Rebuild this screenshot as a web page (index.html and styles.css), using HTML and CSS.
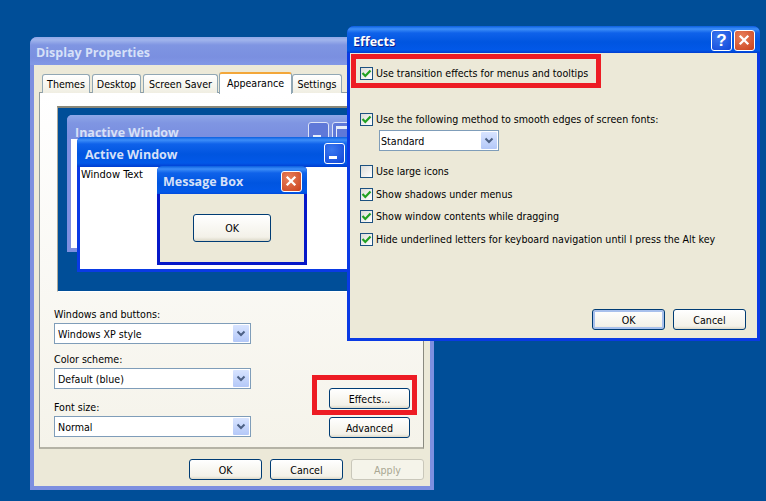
FILE: index.html
```html
<!DOCTYPE html>
<html lang="en">
<head>
<meta charset="utf-8">
<title>Display Properties</title>
<link rel="stylesheet" href="styles.css">
</head>
<body>
<div class="desktop">
  <section class="win dp inactive">
    <header class="titlebar"><span class="title">Display Properties</span></header>
    <div class="client dp-client">
      <div class="tabs">
        <span class="tab t1">Themes</span>
        <span class="tab t2">Desktop</span>
        <span class="tab t3">Screen Saver</span>
        <span class="tab t4 active">Appearance</span>
        <span class="tab t5">Settings</span>
      </div>
      <div class="pane">
        <div class="preview">
          <div class="mini m-inactive inactive">
            <div class="mini-title"><span class="title">Inactive Window</span>
              <span class="cap cap-pale"><i class="min"></i></span>
              <span class="cap cap-pale"><i class="max"></i></span>
            </div>
          </div>
          <div class="mini m-active">
            <div class="mini-title"><span class="title">Active Window</span>
              <span class="cap"><i class="min"></i></span>
            </div>
            <div class="mini-body">Window Text</div>
          </div>
          <div class="mini m-box">
            <div class="mini-title box-title"><span class="title">Message Box</span>
              <span class="cap close"><svg viewBox="0 0 20 20" width="19" height="19"><path d="M5 5 L14 14 M14 5 L5 14" stroke="#fff" stroke-width="2.4" fill="none"/></svg></span>
            </div>
            <div class="box-body"><span class="btn box-ok">OK</span></div>
          </div>
        </div>
        <div class="lower">
          <div class="fields">
            <label class="lbl">Windows and buttons:</label>
            <div class="combo wide"><span>Windows XP style</span><span class="arrow"><svg viewBox="0 0 16 17" width="16" height="17"><path d="M4.5 6.5 L8 10 L11.5 6.5" stroke="#4d6185" stroke-width="2" fill="none"/></svg></span></div>
            <label class="lbl l2">Color scheme:</label>
            <div class="combo wide"><span>Default (blue)</span><span class="arrow"><svg viewBox="0 0 16 17" width="16" height="17"><path d="M4.5 6.5 L8 10 L11.5 6.5" stroke="#4d6185" stroke-width="2" fill="none"/></svg></span></div>
            <label class="lbl l3">Font size:</label>
            <div class="combo wide"><span>Normal</span><span class="arrow"><svg viewBox="0 0 16 17" width="16" height="17"><path d="M4.5 6.5 L8 10 L11.5 6.5" stroke="#4d6185" stroke-width="2" fill="none"/></svg></span></div>
          </div>
          <div class="side-btns">
            <span class="btn side">Effects...</span>
            <span class="btn side">Advanced</span>
          </div>
        </div>
      </div>
      <div class="actions dp-actions">
        <span class="btn act">OK</span>
        <span class="btn act">Cancel</span>
        <span class="btn act disabled">Apply</span>
      </div>
    </div>
  </section>

  <section class="win fx">
    <header class="titlebar"><span class="title">Effects</span>
      <span class="cap help">?</span>
      <span class="cap close"><svg viewBox="0 0 20 20" width="19" height="19"><path d="M5 5 L14 14 M14 5 L5 14" stroke="#fff" stroke-width="2.4" fill="none"/></svg></span>
    </header>
    <div class="client fx-client">
      <div class="check c1"><span class="box on"><svg viewBox="0 0 11 11" width="11" height="11"><path d="M1.5 5 L4.3 8 L9.5 2.5" stroke="#21a121" stroke-width="2.2" fill="none"/></svg></span>Use transition effects for menus and tooltips</div>
      <div class="check c2"><span class="box on"><svg viewBox="0 0 11 11" width="11" height="11"><path d="M1.5 5 L4.3 8 L9.5 2.5" stroke="#21a121" stroke-width="2.2" fill="none"/></svg></span>Use the following method to smooth edges of screen fonts:</div>
      <div class="combo narrow"><span>Standard</span><span class="arrow"><svg viewBox="0 0 16 17" width="16" height="17"><path d="M4.5 6.5 L8 10 L11.5 6.5" stroke="#4d6185" stroke-width="2" fill="none"/></svg></span></div>
      <div class="check c3"><span class="box"></span>Use large icons</div>
      <div class="check c4"><span class="box on"><svg viewBox="0 0 11 11" width="11" height="11"><path d="M1.5 5 L4.3 8 L9.5 2.5" stroke="#21a121" stroke-width="2.2" fill="none"/></svg></span>Show shadows under menus</div>
      <div class="check c5"><span class="box on"><svg viewBox="0 0 11 11" width="11" height="11"><path d="M1.5 5 L4.3 8 L9.5 2.5" stroke="#21a121" stroke-width="2.2" fill="none"/></svg></span>Show window contents while dragging</div>
      <div class="check c4"><span class="box on"><svg viewBox="0 0 11 11" width="11" height="11"><path d="M1.5 5 L4.3 8 L9.5 2.5" stroke="#21a121" stroke-width="2.2" fill="none"/></svg></span>Hide underlined letters for keyboard navigation until I press the Alt key</div>
      <div class="actions fx-actions">
        <span class="btn act default">OK</span>
        <span class="btn act">Cancel</span>
      </div>
    </div>
  </section>

  <div class="mark mark-effects"></div>
  <div class="mark mark-check"></div>
</div>
</body>
</html>
```
FILE: styles.css
```css
* { box-sizing: border-box; }
html, body { margin: 0; padding: 0; }
body {
  font-family: "DejaVu Sans", Tahoma, sans-serif;
  font-stretch: condensed;
  font-size: 10.6px;
  color: #000;
}
.desktop {
  position: relative;
  width: 766px;
  height: 501px;
  background: #004e98;
  overflow: hidden;
}
.win {
  position: absolute;
  display: flex;
  flex-direction: column;
  border-radius: 7px 7px 0 0;
  background: #0a3ae4;
  padding: 0 3px 3px;
}
.dp {
  left: 30px; top: 37px; width: 404px; height: 453px;
  background: #7d8fe0;
  padding: 0 4px 4px;
}
.fx {
  left: 347px; top: 26px; width: 413px; height: 315px;
  z-index: 2;
}
.titlebar {
  display: flex;
  align-items: center;
  gap: 2px;
  height: 27px;
  margin: 0 -3px;
  padding: 2px 5px 0 6px;
  border-radius: 7px 7px 0 0;
  background: linear-gradient(#0a5fe0 0, #3d8ef8 3px, #0f62ea 7px, #0055e0 16px, #0258e8 24px, #003dd0 27px);
}
.dp .titlebar {
  height: 28px;
  margin: 0 -4px;
  padding-top: 2px;
  background: linear-gradient(#8fa8e8 0, #a0b4ec 3px, #7f95e2 8px, #7a8fe0 20px, #8298e6 28px);
}
.title {
  font-family: "Open Sans", sans-serif;
  font-stretch: normal;
  font-weight: 700;
  font-size: 12.5px;
  color: #fff;
  flex: 1;
  text-shadow: 1px 1px 0 #0f1f8f;
}
.fx .title, .m-active .title { margin-top: 2px; }
.inactive .title {
  color: #d6e0f8;
  text-shadow: none;
}
.cap {
  display: flex;
  align-items: center;
  justify-content: center;
  width: 21px;
  height: 21px;
  border: 1px solid #fff;
  border-radius: 3px;
  background: radial-gradient(circle at 35% 30%, #3a78f0, #1046d8);
  flex: none;
  position: relative;
}
.cap.close { background: radial-gradient(circle at 35% 30%, #e8805c, #c9401c); }
.cap.help {
  font-family: "Liberation Sans", sans-serif;
  font-stretch: normal;
  font-weight: 700;
  font-size: 17px;
  color: #fff;
}
.cap-pale { background: #5f78d8; border-color: #dde4f8; }
.min { position: absolute; left: 4px; bottom: 4px; width: 8px; height: 3px; background: #fff; }
.cap-pale .min { background: #e8eefa; }
.max { display: block; width: 13px; height: 13px; border: 1px solid #e8eefa; border-top-width: 3px; }

.client { flex: 1; background: #ece9d8; display: flex; flex-direction: column; min-height: 0; }

.dp-client { padding: 7px 5px 0 5px; }
.tabs { display: flex; align-items: flex-end; height: 21px; padding-left: 3px; position: relative; z-index: 1; }
.tab {
  height: 19px;
  border: 1px solid #91a7b4;
  border-bottom: 0;
  border-radius: 3px 3px 0 0;
  background: linear-gradient(#fff, #f0eee2);
  text-align: center;
  line-height: 18px;
  margin-right: 2px;
  white-space: nowrap;
}
.t1 { width: 48px; }
.t2 { width: 49px; }
.t3 { width: 75px; margin-right: 1px; }
.t4 { width: 73px; margin-right: 0; }
.t5 { width: 50px; }
.tab.active {
  height: 22px;
  background: #fff;
  border-top: 2px solid #f3a73a;
  line-height: 18px;
  margin-bottom: -1px;
}
.pane {
  height: 357px;
  margin-right: 1px;
  border: 1px solid #919b9c;
  border-right-color: #8a8a80;
  border-bottom: 2px solid #b5b3a6;
  background: linear-gradient(#fff, #f5f3ea);
  padding: 13px 18px 0 14px;
  margin-top: -1px;
}
.preview {
  position: relative;
  height: 186px;
  margin-left: 3px;
  background: #004e98;
  border: 1px solid #aca899;
  border-top: 2px solid #8b8878;
  border-right-color: #fff;
  border-bottom-color: #fff;
}
.mini { position: absolute; border-radius: 5px 5px 0 0; background: #0a3ae4; padding: 0 3px 3px; }
.m-inactive { left: 9px; top: 7px; width: 291px; height: 137px; background: #7d8fe0; }
.m-inactive::after { content: ""; position: absolute; left: 4px; right: 3px; top: 24px; bottom: 4px; background: #fff; }
.m-active { left: 19px; top: 29px; width: 300px; height: 135px; display: flex; flex-direction: column; }
.m-box { left: 99px; top: 58px; width: 150px; height: 99px; border-radius: 5px 5px 0 0; display: flex; flex-direction: column; background: #0618c8; }
.mini-title {
  display: flex;
  align-items: center;
  gap: 3px;
  height: 30px;
  margin: 0 -3px;
  padding: 3px 5px 0 8px;
  border-radius: 5px 5px 0 0;
  background: linear-gradient(#0a5fe0 0, #3d8ef8 3px, #0f62ea 7px, #0055e0 17px, #0258e8 26px, #003dd0 30px);
}
.m-inactive .mini-title { background: linear-gradient(#8fa8e8, #7f95e2 8px, #7a8fe0 20px); align-items: flex-start; padding-top: 7px; height: 24px; }
.m-inactive .title { margin-top: 2px; }
.box-title { padding: 2px 5px 0 6px; height: 28px; }
.m-active .cap { margin-right: 27px; }
.mini-body { flex: 1; background: #fff; padding: 1px 1px 0; font-size: 11px; line-height: 14px; }
.box-body { flex: 1; background: #ece9d8; display: flex; justify-content: center; padding-top: 20px; }
.box-ok { width: 78px; height: 28px; margin-left: 0; }

.lower { display: flex; justify-content: space-between; align-items: flex-start; padding-top: 15px; }
.fields { display: flex; flex-direction: column; width: 197px; }
.lbl { height: 16px; line-height: 14px; margin-bottom: 0; }
.l2 { margin-top: 8px; }
.l3 { margin-top: 11px; margin-bottom: 0; }
.side-btns { display: flex; flex-direction: column; gap: 8px; padding-top: 81px; margin-right: -5px; }
.side { width: 81px; height: 21px; }

.combo {
  display: flex;
  align-items: center;
  justify-content: space-between;
  height: 21px;
  background: #fff;
  border: 1px solid #7f9db9;
  padding: 1px 1px 1px 3px;
  flex: none;
}
.arrow {
  width: 16px;
  height: 17px;
  background: linear-gradient(#d8e4ff, #b4c8f8);
  border-radius: 1px;
  display: flex;
}
.wide { width: 197px; }
.narrow { width: 120px; margin-left: 19px; margin-top: 4px; padding-left: 1px; }

.btn {
  display: flex;
  align-items: center;
  justify-content: center;
  border: 1px solid #003c74;
  border-radius: 3px;
  background: linear-gradient(#fff, #f3f1e8 85%, #dcd8c8);
  white-space: nowrap;
  font-size: 10.6px;
}
.act { width: 73px; height: 21px; }
.btn.default { box-shadow: inset 0 0 0 2px #a8c0ec; }
.btn.disabled { border-color: #c9c7ba; color: #a9a793; background: #f5f4ea; }
.actions { display: flex; gap: 8px; }
.dp-actions { padding-left: 150px; padding-top: 10px; }

.fx-client { padding: 13px 0 0 10px; }
.check { display: flex; align-items: center; height: 14px; white-space: nowrap; }
.box {
  width: 13px; height: 13px;
  border: 1px solid #1c5180;
  background: linear-gradient(135deg, #dcdcd7, #fff);
  margin-right: 3px;
  flex: none;
  display: flex;
  align-items: center;
  justify-content: center;
}
.c2 { margin-top: 32px; }
.c3 { margin-top: 13px; }
.c4 { margin-top: 9px; }
.c5 { margin-top: 8px; }
.fx-actions { margin-top: auto; padding: 0 11px 8px 0; justify-content: flex-end; }

.mark { position: absolute; border: 5px solid #ed1c24; z-index: 3; }
.mark-effects { left: 312px; top: 375px; width: 105px; height: 40px; }
.mark-check { left: 351px; top: 54px; width: 250px; height: 34px; }
```
